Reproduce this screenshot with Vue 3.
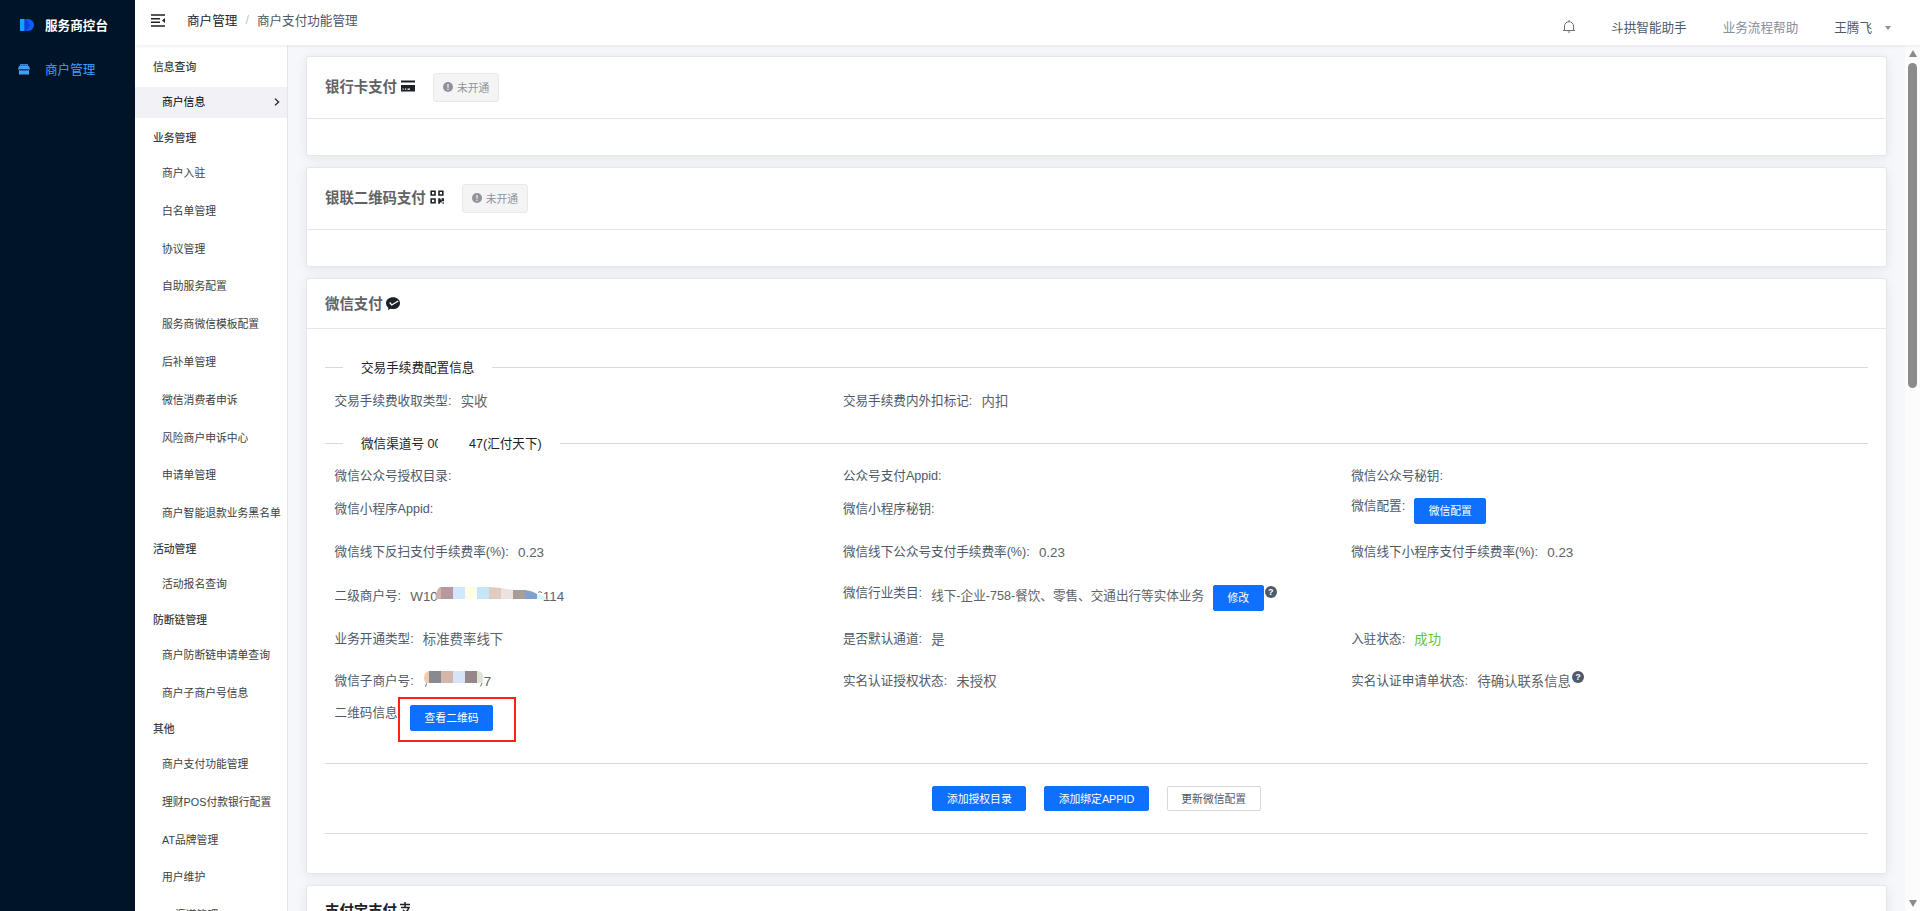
<template>
  <div class="layout">
    <aside class="sidebar">
      <div class="brand">
        <svg class="brand-logo" viewBox="0 0 14 12">
          <path d="M0 0h8a6 6 0 0 1 0 12H0z" fill="#0a5cff" />
          <path d="M0 0h4.5v12H0z" fill="#18a0ff" />
          <path d="M4.5 0h2l3.500 6-3.500 6h-2z" fill="#0b43d8" />
        </svg>
        <span>服务商控台</span>
      </div>
      <div class="side-item">
        <svg class="side-icon" viewBox="0 0 12 11">
          <path d="M2 0h8v2H2z" fill="#2f7fd0" />
          <path d="M1 2h10l1 3.500H0z" fill="#409eff" />
          <path d="M1 6h10v4.500H1z" fill="#409eff" />
          <path d="M1.500 5.700q1 1.200 2.200 0q1 1.200 2.300 0q1.100 1.200 2.300 0q1.100 1.200 2.200 0" fill="none" stroke="#001428" stroke-width=".8" />
        </svg>
        <span>商户管理</span>
      </div>
    </aside>

    <div class="page">
      <header class="topbar">
        <svg class="fold" viewBox="0 0 14 13">
          <path d="M0 1h14M0 4.7h9M0 8.3h9M0 12h14" stroke="#1d2129" stroke-width="1.4" />
          <path d="M14 4v5l-3-2.5z" fill="#1d2129" />
        </svg>
        <div class="crumbs">
          <span class="crumb-root">商户管理</span>
          <span class="crumb-sep">/</span>
          <span>商户支付功能管理</span>
        </div>
        <div class="top-right">
          <svg class="bell" viewBox="0 0 12 13">
            <path d="M1.5 10V6a4.5 4.3 0 0 1 9 0v4M0 10.5h12M4.8 12h2.4M6 0v1.6" fill="none" stroke="#6b6f76" />
          </svg>
          <span class="link-main">斗拱智能助手</span>
          <span class="link-sub">业务流程帮助</span>
          <span class="user">王腾飞</span>
          <i class="caret"></i>
        </div>
      </header>

      <div class="body">
        <nav class="menu">
          <div v-for="group in menu" :key="group.title" class="menu-group">
            <div class="menu-title">{{ group.title }}</div>
            <div v-for="item in group.items" :key="item" class="menu-row">
              <div class="menu-item" :class="{ active: item === activeMenu }">
                <span>{{ item }}</span>
                <svg v-if="item === activeMenu" class="arrow" viewBox="0 0 6 8">
                  <path d="M1 .6L4.6 4L1 7.4" fill="none" stroke="#1d2129" stroke-width="1.3" />
                </svg>
              </div>
            </div>
          </div>
        </nav>

        <main class="content">
          <section v-for="card in closedCards" :key="card.title" class="card">
            <div class="card-head tall">
              <span class="card-title">{{ card.title }}</span>
              <svg v-if="card.icon === 'bank'" class="title-icon" viewBox="0 0 14 12">
                <path d="M0 .5h14v2H0zM0 5h14v6.5H0z" fill="#1d2129" />
                <path d="M1.5 8.5h1.2v1.2H1.5zM4 8.5h1.2v1.2H4zM6.5 8.5h2.5v1.2H6.5z" fill="#fff" />
              </svg>
              <svg v-else class="title-icon qr" viewBox="0 0 14 14">
                <path d="M1.2 1.2h3.8v3.8H1.2zM9 1.2h3.8v3.8H9zM1.2 9h3.8v3.8H1.2z" fill="none" stroke="#1d2129" stroke-width="1.6" />
                <path d="M8.2 8.2h1.8v5.6H8.2zM10 8.2l1.5 2.5V8.2H14v3h-2.2v1.2H10zM12.4 12.4H14v1.4h-1.6z" fill="#1d2129" />
              </svg>
              <span class="tag">
                <svg viewBox="0 0 10 10">
                  <circle cx="5" cy="5" r="5" fill="#909399" />
                  <path d="M5 2v3.7M5 6.8v1.3" stroke="#f4f4f5" stroke-width="1.2" />
                </svg>
                <span>未开通</span>
              </span>
            </div>
            <div class="card-empty"></div>
          </section>

          <section class="card wechat">
            <div class="card-head">
              <span class="card-title">微信支付</span>
              <svg class="title-icon wx" viewBox="0 0 14 13">
                <path d="M7 .3c3.9 0 7 2.6 7 5.9s-3.100 5.900-7 5.900c-.9 0-1.700-.1-2.500-.4L2 13l.3-2.300C.9 9.600 0 8 0 6.200 0 2.900 3.100.3 7 .3z" fill="#1d2129" />
                <path d="M3.700 5.500l2 2.500 6.600-4" fill="none" stroke="#fff" stroke-width="1.300" />
              </svg>
            </div>
            <div class="card-body">
              <div class="divider"><span>交易手续费配置信息</span></div>
              <div class="row fee">
                <div class="cell"><label>交易手续费收取类型:</label><span class="value">实收</span></div>
                <div class="cell"><label>交易手续费内外扣标记:</label><span class="value">内扣</span></div>
              </div>
              <div class="divider channel">
                <span>微信渠道号 0<i class="cut">0</i><i class="blank"></i>47(汇付天下)</span>
              </div>

              <div class="row r1">
                <div class="cell"><label>微信公众号授权目录:</label></div>
                <div class="cell"><label>公众号支付Appid:</label></div>
                <div class="cell"><label>微信公众号秘钥:</label></div>
              </div>
              <div class="row r2">
                <div class="cell"><label>微信小程序Appid:</label></div>
                <div class="cell"><label>微信小程序秘钥:</label></div>
                <div class="cell raised"><label>微信配置:</label><button class="btn primary">微信配置</button></div>
              </div>
              <div class="row r3">
                <div v-for="rate in rates" :key="rate" class="cell"><label>{{ rate }}:</label><span class="value">0.23</span></div>
              </div>
              <div class="row r4">
                <div class="cell">
                  <label>二级商户号:</label>
                  <span class="value masked">W10<span class="mask-gap long"></span>114
                    <svg class="mosaic m-long" viewBox="0 0 111 15">
                      <path d="M5 0h-1Q0 2 0 12H5z" fill="#d2b4a4" />
                      <path d="M5 0h12v12H5z" fill="#b8989f" />
                      <path d="M17 0h12v12H17z" fill="#d0e7ff" />
                      <path d="M29 0h12v12H29z" fill="#ffffe6" />
                      <path d="M41 0h12v12H41z" fill="#c5e6f8" />
                      <path d="M53 0l12 1v11H53z" fill="#e0cbbf" />
                      <path d="M65 1l12 2v9H65z" fill="#ece2e2" />
                      <path d="M77 3h12v9H77z" fill="#aa9d98" />
                      <path d="M89 3q8 1 12 4v5H89z" fill="#80a1ce" />
                      <path d="M101 7q6 1 10 6l-10-1z" fill="#ccfdff" />
                      <path d="M102 5.500q2-2 4 .3" fill="none" stroke="#777" />
                    </svg>
                  </span>
                </div>
                <div class="cell industry">
                  <label>微信行业类目:</label>
                  <span class="value small">线下-企业-758-餐饮、零售、交通出行等实体业务</span>
                  <button class="btn primary">修改</button>
                  <span class="help">?</span>
                </div>
              </div>
              <div class="row r5">
                <div class="cell"><label>业务开通类型:</label><span class="value">标准费率线下</span></div>
                <div class="cell"><label>是否默认通道:</label><span class="value">是</span></div>
                <div class="cell"><label>入驻状态:</label><span class="value success">成功</span></div>
              </div>
              <div class="row r6">
                <div class="cell">
                  <label>微信子商户号:</label>
                  <span class="value masked"><span class="mask-gap short"></span>7
                    <svg class="mosaic m-short" viewBox="0 0 60 17">
                      <path d="M5 0Q0 1 0 7q0 3 2 5h3z" fill="#f0cbb0" />
                      <path d="M5 0h12v12H5z" fill="#878a8f" />
                      <path d="M17 0h12v12H17z" fill="#d3b5a9" />
                      <path d="M29 0h12v12H29z" fill="#d5e5f6" />
                      <path d="M41 0h12v12H41z" fill="#98878a" />
                      <path d="M53 0q6 0 6.500 7l-1.500 5H53z" fill="#dde3d5" />
                      <path d="M2.500 12.500L1.500 16M58 12l-1.500 3.500" stroke="#777" />
                    </svg>
                  </span>
                </div>
                <div class="cell"><label>实名认证授权状态:</label><span class="value">未授权</span></div>
                <div class="cell"><label>实名认证申请单状态:</label><span class="value">待确认联系信息</span><span class="help">?</span></div>
              </div>
              <div class="row r7">
                <div class="cell">
                  <label>二维码信息:</label>
                  <span class="qr-action">
                    <button class="btn primary">查看二维码</button>
                    <span class="highlight"></span>
                  </span>
                </div>
              </div>

              <div class="actions">
                <button class="btn primary">添加授权目录</button>
                <button class="btn primary">添加绑定APPID</button>
                <button class="btn plain">更新微信配置</button>
              </div>
            </div>
          </section>

          <section class="card">
            <div class="card-head">
              <span class="card-title dark">支付宝支付</span>
              <svg class="title-icon ali" viewBox="0 0 14 14">
                <path d="M2 2.500h10M7 0v5M3 5.500h8Q9 11 2 13M5 8q3 3 8 4" fill="none" stroke="#1d2129" stroke-width="1.500" />
              </svg>
            </div>
          </section>
        </main>

        <div class="scrollbar">
          <i class="up"></i>
          <i class="thumb"></i>
          <i class="down"></i>
        </div>
      </div>
    </div>
  </div>
</template>

<script setup>
import { ref } from 'vue'

const activeMenu = ref('商户信息')

const menu = [
  { title: '信息查询', items: ['商户信息'] },
  {
    title: '业务管理',
    items: [
      '商户入驻',
      '白名单管理',
      '协议管理',
      '自助服务配置',
      '服务商微信模板配置',
      '后补单管理',
      '微信消费者申诉',
      '风险商户申诉中心',
      '申请单管理',
      '商户智能退款业务黑名单'
    ]
  },
  { title: '活动管理', items: ['活动报名查询'] },
  { title: '防断链管理', items: ['商户防断链申请单查询', '商户子商户号信息'] },
  {
    title: '其他',
    items: ['商户支付功能管理', '理财POS付款银行配置', 'AT品牌管理', '用户维护', 'AT渠道管理']
  }
]

const closedCards = [
  { title: '银行卡支付', icon: 'bank' },
  { title: '银联二维码支付', icon: 'qr' }
]

const rates = [
  '微信线下反扫支付手续费率(%)',
  '微信线下公众号支付手续费率(%)',
  '微信线下小程序支付手续费率(%)'
]
</script>

<style>
body {
  margin: 0;
  overflow: hidden;
}
</style>

<style scoped>
.layout {
  display: flex;
  height: 911px;
  overflow: hidden;
  font-family: "Liberation Sans", "Noto Sans CJK SC", sans-serif;
  font-size: 12.6px;
  color: #4e5969;
  background: #f5f7fa;
}

.layout * {
  box-sizing: border-box;
}

svg {
  display: block;
  flex-shrink: 0;
}

/* dark sidebar */
.sidebar {
  width: 135px;
  flex-shrink: 0;
  background: #001428;
}

.brand {
  display: flex;
  align-items: center;
  height: 50px;
  padding-left: 20px;
  color: #fff;
  font-weight: 700;
}

.brand-logo {
  width: 14px;
  height: 12px;
  margin-right: 11px;
}

.brand span,
.side-item span {
  padding-bottom: 1px;
}

.side-item {
  display: flex;
  align-items: center;
  height: 38px;
  padding-left: 18px;
  color: #409eff;
}

.side-icon {
  width: 12px;
  height: 11px;
  margin-right: 15px;
}

.page {
  flex: 1;
  min-width: 0;
  display: flex;
  flex-direction: column;
}

/* top bar */
.topbar {
  position: relative;
  z-index: 2;
  display: flex;
  height: 45px;
  flex-shrink: 0;
  padding-left: 16px;
  background: #fff;
  box-shadow: 0 1px 4px rgba(0, 21, 41, 0.08);
}

.fold {
  width: 14px;
  height: 13px;
  margin-top: 14px;
}

.crumbs {
  display: flex;
  height: 39px;
  align-items: center;
  margin-left: 22px;
}

.crumb-root {
  color: #1d2129;
}

.crumb-sep {
  margin: 0 8px;
  color: #c0c4cc;
}

.top-right {
  display: flex;
  align-items: center;
  height: 52px;
  margin-left: auto;
  padding-right: 29px;
}

.bell {
  width: 12px;
  height: 13px;
  margin-right: 36px;
}

.link-main {
  margin-right: 36px;
}

.link-sub {
  margin-right: 36px;
  color: #86909c;
}

.user {
  margin-right: 13px;
}

.caret {
  border: 3.5px solid transparent;
  border-top: 4px solid #86909c;
  border-bottom: 0;
  margin-top: 4px;
}

.body {
  flex: 1;
  min-height: 0;
  display: flex;
}

/* second level menu */
.menu {
  width: 153px;
  flex-shrink: 0;
  padding-top: 5px;
  overflow: hidden;
  background: #fff;
  border-right: 1px solid #e4e6ea;
  font-size: 10.8px;
  color: #3c3e42;
}

.menu-title {
  height: 33.2px;
  line-height: 33.2px;
  padding: 1px 0 0 18px;
  font-weight: 500;
}

.menu-row {
  display: flex;
  align-items: center;
  height: 37.8px;
}

.menu-item {
  flex: 1;
  display: flex;
  align-items: center;
  justify-content: space-between;
  height: 31px;
  padding: 0 7px 0 27px;
  white-space: nowrap;
}

.menu-item span {
  padding-bottom: 2px;
}

.menu-item.active {
  background: #f2f2f6;
  color: #000;
}

.arrow {
  width: 6px;
  height: 8px;
}

/* cards */
.content {
  flex: 1;
  min-width: 0;
  padding: 11px 18px 0;
  overflow: hidden;
}

.card {
  margin-bottom: 11px;
  background: #fff;
  border: 1px solid #e4e7ed;
  border-radius: 3px;
  box-shadow: 0 2px 11px rgba(0, 0, 0, 0.08);
}

.card-head {
  display: flex;
  align-items: center;
  height: 50px;
  padding: 0 18px;
  border-bottom: 1px solid #e4e7ed;
}

.card-head.tall {
  height: 62px;
}

.card-title {
  padding-bottom: 3px;
  font-size: 14.4px;
  font-weight: 700;
  color: #606266;
}

.tall .card-title {
  padding-bottom: 4px;
}

.card-title.dark {
  color: #1d2129;
}

.title-icon {
  width: 14px;
  height: 12px;
  margin: 0 0 3px 4px;
}

.title-icon.qr,
.title-icon.ali {
  height: 14px;
}

.title-icon.wx {
  height: 13px;
  margin: 0 0 1px 3.5px;
}

.title-icon.ali {
  margin-left: 1px;
}

.card-empty {
  height: 36px;
}

.tag {
  display: flex;
  align-items: center;
  gap: 4px;
  width: 66px;
  height: 29px;
  margin-left: 18px;
  padding-left: 9px;
  border: 1px solid #e9e9eb;
  border-radius: 3px;
  background: #f4f4f5;
  color: #909399;
  font-size: 10.8px;
}

.tag span {
  padding-bottom: 2px;
}

.tag svg {
  width: 10px;
  height: 10px;
  margin-bottom: 1px;
}

.wechat {
  height: 596px;
}

.card-body {
  padding: 18px 18px 0;
}

.divider {
  display: flex;
  align-items: center;
  height: 38px;
  color: #1d2129;
}

.divider::before,
.divider::after {
  content: "";
  height: 1px;
  margin-top: 3px;
  background: #d9d9d9;
}

.divider::before {
  width: 18px;
  margin-right: 18px;
}

.divider::after {
  flex: 1;
  margin-left: 18px;
}

.divider.channel {
  margin-bottom: -1px;
}

.cut {
  display: inline-block;
  width: 4px;
  height: 14px;
  overflow: hidden;
  line-height: 14px;
  vertical-align: -3px;
  font-style: normal;
}

.blank {
  display: inline-block;
  width: 30.5px;
}

.row {
  display: flex;
  padding: 0 8.4px 0 9.6px;
}

.cell {
  display: flex;
  align-items: flex-start;
  width: 33.3333%;
  line-height: 33px;
  white-space: nowrap;
}

.value {
  margin-left: 9.2px;
  color: #606266;
  font-size: 13.4px;
}

.value.small {
  font-size: 12.6px;
}

.value.success {
  color: #67c23a;
}

.fee {
  height: 38px;
}

.r1 {
  height: 33px;
}

.r2 {
  height: 43px;
}

.r3 {
  height: 44px;
}

.r4 {
  height: 43px;
}

.r5 {
  height: 42px;
}

.r6 {
  height: 32px;
}

.r7 {
  height: 66px;
}

.raised label,
.industry label {
  line-height: 27px;
}

.cell .btn {
  margin: 5px 0 0 9px;
}

.help {
  width: 12px;
  height: 12px;
  margin: 6px 0 0 1px;
  border-radius: 50%;
  background: #4e5969;
  color: #fff;
  font-size: 9px;
  font-weight: 700;
  line-height: 12px;
  text-align: center;
}

.masked {
  position: relative;
}

.mask-gap {
  display: inline-block;
}

.mask-gap.long {
  width: 105px;
}

.mask-gap.short {
  width: 61px;
}

.mosaic {
  position: absolute;
}

.m-long {
  left: 26px;
  top: 7px;
  width: 111px;
  height: 15px;
}

.m-short {
  left: 1px;
  top: 6px;
  width: 60px;
  height: 17px;
}

.btn {
  height: 26px;
  padding: 0 13.5px;
  border: 1px solid #0f6fff;
  border-radius: 2px;
  background: #fff;
  color: #4e5969;
  font-family: inherit;
  font-size: 10.8px;
  line-height: 22px;
  white-space: nowrap;
}

.btn.primary {
  background: #0f6fff;
  color: #fff;
}

.btn.plain {
  border-color: #d9d9d9;
}

.qr-action {
  position: relative;
  display: flex;
}

.qr-action .btn {
  margin-top: 8px;
}

/* red frame around the QR button */
.highlight {
  position: absolute;
  left: -3px;
  top: 0;
  width: 118px;
  height: 45px;
  border: 2px solid #ff2111;
}

.actions {
  display: flex;
  align-items: center;
  justify-content: center;
  gap: 18px;
  height: 71px;
  border-top: 1px solid #d9d9d9;
  border-bottom: 1px solid #d9d9d9;
}

.actions .btn {
  height: 25px;
}

/* scrollbar */
.scrollbar {
  display: flex;
  flex-direction: column;
  align-items: center;
  width: 15px;
  flex-shrink: 0;
  padding: 5px 0 4px;
  background: #fcfcfc;
}

.up,
.down {
  border: 4.5px solid transparent;
}

.up {
  border-top: 0;
  border-bottom: 7px solid #8b8b8b;
}

.down {
  margin-top: auto;
  border-bottom: 0;
  border-top: 7px solid #8b8b8b;
}

.thumb {
  width: 9px;
  height: 325px;
  margin-top: 6px;
  border-radius: 5px;
  background: #8b8b8b;
}
</style>
